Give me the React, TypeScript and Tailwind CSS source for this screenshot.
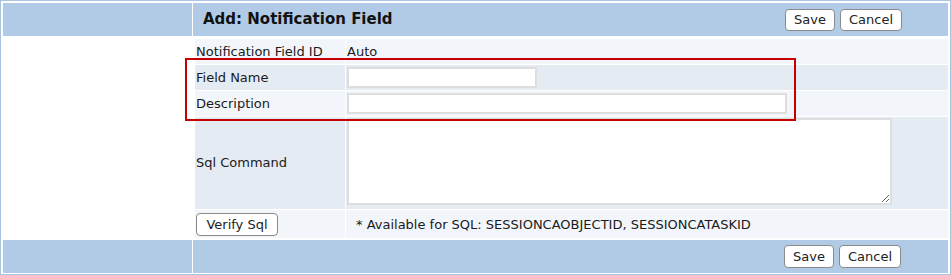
import React from "react";

const btn =
  "h-[22px] px-[6px] bg-white border border-[#8a8a8a] rounded-[4px] text-[13px] leading-none text-[#222]";

export default function App() {
  return (
    <div className="relative w-[951px] h-[275px] bg-white border border-[#a9c4e1] p-[2px] font-['DejaVu_Sans',Verdana,sans-serif] text-[13px] text-[#1a1a1a]">
      {/* header */}
      <div className="flex h-[33px] gap-[1px]">
        <div className="w-[189px] bg-[#b1cbe6]" />
        <div className="flex-1 bg-[#b1cbe6] flex items-center justify-between pl-[10px] pr-[46px]">
          <h1 className="text-[15px] font-bold text-[#111]">Add: Notification Field</h1>
          <div className="flex gap-[5px]">
            <button className={btn + " w-[50px]"}>Save</button>
            <button className={btn + " w-[62px]"}>Cancel</button>
          </div>
        </div>
      </div>

      {/* body */}
      <div className="flex h-[204px] gap-[1px]">
        <div className="w-[189px] bg-white" />
        <div className="flex-1 pt-[3px] pl-[2px] flex flex-col gap-[1px]">
          <div className="flex h-[25px] gap-[1px]">
            <div className="w-[150px] bg-[#f2f6fa] flex items-center pl-[1px]">Notification Field ID</div>
            <div className="flex-1 bg-[#f2f6fa] flex items-center pl-[1px]">Auto</div>
          </div>
          <div className="flex h-[25px] gap-[1px]">
            <div className="w-[150px] bg-[#e4ebf3] flex items-center pl-[1px]">Field Name</div>
            <div className="flex-1 bg-[#e4ebf3] flex items-center pl-[1px]">
              <input className="w-[190px] h-[21px] bg-white border-2 border-[#dedede] outline-none" />
            </div>
          </div>
          <div className="flex h-[25px] gap-[1px]">
            <div className="w-[150px] bg-[#f2f6fa] flex items-center pl-[1px]">Description</div>
            <div className="flex-1 bg-[#f2f6fa] flex items-center pl-[1px]">
              <input className="w-[440px] h-[21px] bg-white border-2 border-[#dedede] outline-none" />
            </div>
          </div>
          <div className="flex h-[92px] gap-[1px]">
            <div className="w-[150px] bg-[#e4ebf3] flex items-center pl-[1px]">Sql Command</div>
            <div className="flex-1 bg-[#e4ebf3] pl-[1px] pt-[1px]">
              <textarea className="block w-[545px] h-[87px] bg-white border-2 border-[#dedede] outline-none" />
            </div>
          </div>
          <div className="flex h-[28px] gap-[1px]">
            <div className="w-[150px] bg-[#f2f6fa] flex items-center pl-[1px]">
              <button className={btn + " w-[82px] h-[23px]"}>Verify Sql</button>
            </div>
            <div className="flex-1 bg-[#f2f6fa] flex items-center pl-[10px] pt-[1px]">
              * Available for SQL: SESSIONCAOBJECTID, SESSIONCATASKID
            </div>
          </div>
        </div>
      </div>

      {/* footer */}
      <div className="flex h-[33px] gap-[1px]">
        <div className="w-[189px] bg-[#b1cbe6]" />
        <div className="flex-1 bg-[#b1cbe6] flex items-center justify-end pr-[47px]">
          <div className="flex gap-[5px]">
            <button className={btn + " w-[50px] h-[23px]"}>Save</button>
            <button className={btn + " w-[62px] h-[23px]"}>Cancel</button>
          </div>
        </div>
      </div>

      {/* highlight */}
      <div className="absolute left-[184px] top-[57px] w-[611px] h-[63px] border-2 border-[#c40000] pointer-events-none" />
    </div>
  );
}
